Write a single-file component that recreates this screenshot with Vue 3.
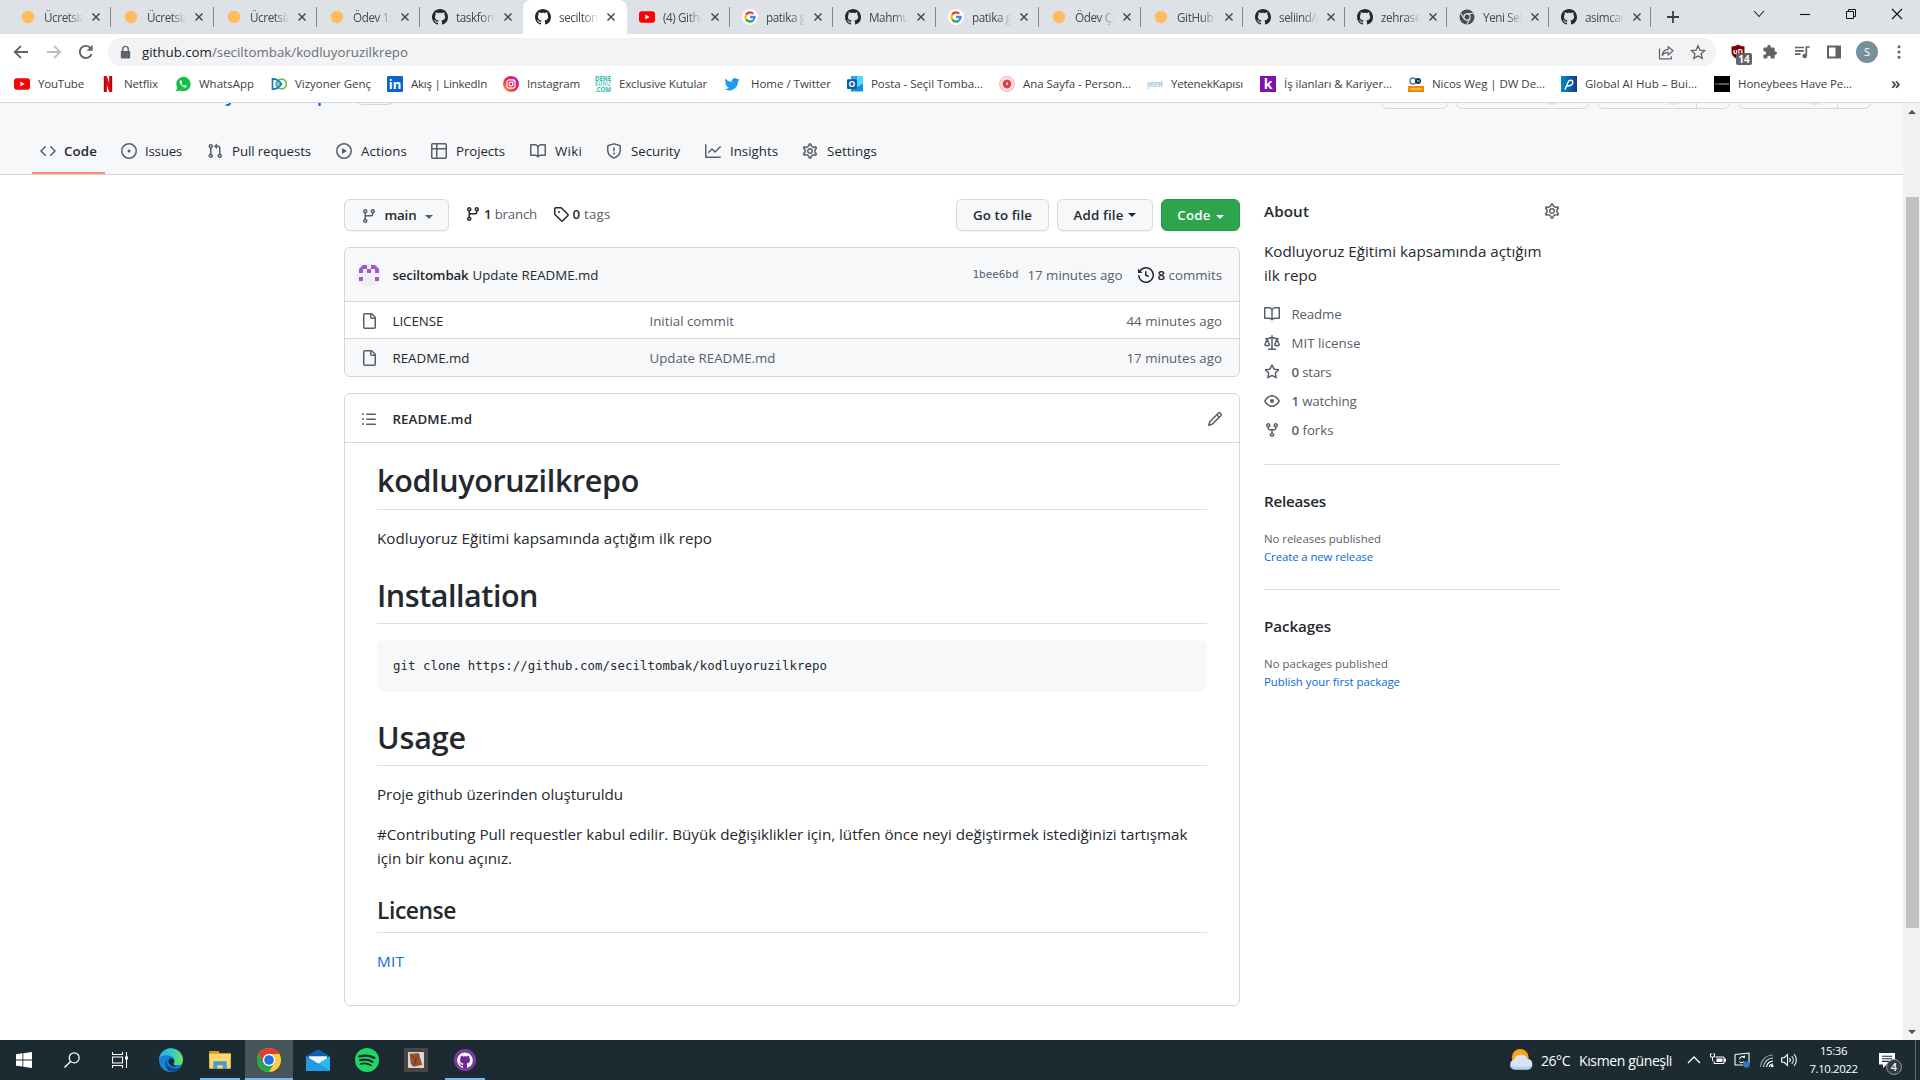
<script setup>
import { h } from 'vue'

const p = (d) => `<path fill-rule="evenodd" d="${d}"/>`
const branch = p('M11.75 2.5a.75.75 0 100 1.5.75.75 0 000-1.5zm-2.25.75a2.25 2.25 0 113 2.122V6A2.5 2.5 0 0110 8.5H6a1 1 0 00-1 1v1.128a2.251 2.251 0 11-1.5 0V5.372a2.25 2.25 0 111.5 0v1.836A2.492 2.492 0 016 7h4a1 1 0 001-1v-.628A2.25 2.25 0 019.5 3.25zM4.25 12a.75.75 0 100 1.5.75.75 0 000-1.5zM3.5 3.25a.75.75 0 111.5 0 .75.75 0 01-1.5 0z')
const githubMark = 'M8 0C3.58 0 0 3.58 0 8c0 3.54 2.29 6.53 5.47 7.59.4.07.55-.17.55-.38 0-.19-.01-.82-.01-1.49-2.01.37-2.53-.49-2.69-.94-.09-.23-.48-.94-.82-1.13-.28-.15-.68-.52-.01-.53.63-.01 1.08.58 1.23.82.72 1.21 1.87.87 2.33.66.07-.52.28-.87.51-1.07-1.78-.2-3.64-.89-3.64-3.95 0-.87.31-1.59.82-2.15-.08-.2-.36-1.02.08-2.12 0 0 .67-.21 2.2.82.64-.18 1.32-.27 2-.27.68 0 1.36.09 2 .27 1.53-1.04 2.2-.82 2.2-.82.44 1.1.16 1.92.08 2.12.51.56.82 1.27.82 2.15 0 3.07-1.87 3.75-3.65 3.95.29.25.54.73.54 1.48 0 1.07-.01 1.93-.01 2.2 0 .21.15.46.55.38A8.013 8.013 0 0016 8c0-4.42-3.58-8-8-8z'
const letter = (x, y, size, fill, text) =>
  `<text x="${x}" y="${y}" font-family="Open Sans, sans-serif" font-weight="700" font-size="${size}" fill="${fill}" text-anchor="middle">${text}</text>`

const icons = {
  code: p('M4.72 3.22a.75.75 0 011.06 1.06L2.06 8l3.72 3.72a.75.75 0 11-1.06 1.06L.47 8.53a.75.75 0 010-1.06l4.25-4.25zm6.56 0a.75.75 0 10-1.06 1.06L13.94 8l-3.72 3.72a.75.75 0 101.06 1.06l4.25-4.25a.75.75 0 000-1.06l-4.25-4.25z'),
  issue: p('M8 9.5a1.5 1.5 0 100-3 1.5 1.5 0 000 3z') + p('M8 0a8 8 0 100 16A8 8 0 008 0zM1.5 8a6.5 6.5 0 1113 0 6.5 6.5 0 01-13 0z'),
  pull: p('M7.177 3.073L9.573.677A.25.25 0 0110 .854v4.792a.25.25 0 01-.427.177L7.177 3.427a.25.25 0 010-.354zM3.75 2.5a.75.75 0 100 1.5.75.75 0 000-1.5zm-2.25.75a2.25 2.25 0 113 2.122v5.256a2.251 2.251 0 11-1.5 0V5.372A2.25 2.25 0 011.5 3.25zM11 2.5h-1V4h1a1 1 0 011 1v5.628a2.251 2.251 0 101.5 0V5A2.5 2.5 0 0011 2.5zm1 10.25a.75.75 0 111.5 0 .75.75 0 01-1.5 0zM3.75 12a.75.75 0 100 1.5.75.75 0 000-1.5z'),
  play: p('M1.5 8a6.5 6.5 0 1113 0 6.5 6.5 0 01-13 0zM8 0a8 8 0 100 16A8 8 0 008 0zM6.379 5.227A.25.25 0 006 5.442v5.117a.25.25 0 00.379.214l4.264-2.559a.25.25 0 000-.428L6.379 5.227z'),
  table: p('M0 1.75C0 .784.784 0 1.75 0h12.5C15.216 0 16 .784 16 1.75v12.5A1.75 1.75 0 0114.25 16H1.75A1.75 1.75 0 010 14.25V1.75zM6.5 6.5v8h7.75a.25.25 0 00.25-.25V6.5h-8zm8-1.5V1.75a.25.25 0 00-.25-.25H6.5V5h8zm-13 1.5v7.75c0 .138.112.25.25.25H5v-8H1.5zM5 5V1.5H1.75a.25.25 0 00-.25.25V5H5z'),
  book: p('M0 1.75A.75.75 0 01.75 1h4.253c1.227 0 2.317.59 3 1.501A3.744 3.744 0 0111.006 1h4.245a.75.75 0 01.75.75v10.5a.75.75 0 01-.75.75h-4.507a2.25 2.25 0 00-1.591.659l-.622.621a.75.75 0 01-1.06 0l-.622-.621A2.25 2.25 0 005.258 13H.75a.75.75 0 01-.75-.75V1.75zm8.755 3a2.25 2.25 0 012.25-2.25H14.5v9h-3.757c-.71 0-1.4.201-1.992.572l.004-7.322zm-1.504 7.324l.004-5.073-.002-2.253A2.25 2.25 0 005.003 2.5H1.5v9h3.757a3.75 3.75 0 011.994.574z'),
  shield: p('M7.467.133a1.75 1.75 0 011.066 0l5.25 1.68A1.75 1.75 0 0115 3.48V7c0 1.566-.32 3.182-1.303 4.682-.983 1.498-2.585 2.813-5.032 3.855a1.7 1.7 0 01-1.33 0c-2.447-1.042-4.049-2.357-5.032-3.855C1.32 10.182 1 8.566 1 7V3.48a1.75 1.75 0 011.217-1.667l5.25-1.68zm.61 1.429a.25.25 0 00-.153 0l-5.25 1.68a.25.25 0 00-.174.238V7c0 1.358.275 2.666 1.057 3.86.784 1.194 2.121 2.34 4.366 3.297a.2.2 0 00.154 0c2.245-.956 3.582-2.104 4.366-3.298C13.225 9.666 13.5 8.36 13.5 7V3.48a.25.25 0 00-.174-.237l-5.25-1.68zM8.75 4.75a.75.75 0 00-1.5 0v3a.75.75 0 001.5 0v-3zM9 10.5a1 1 0 11-2 0 1 1 0 012 0z'),
  graph: p('M1.5 1.75a.75.75 0 00-1.5 0v12.5c0 .414.336.75.75.75h14.5a.75.75 0 000-1.5H1.5V1.75zm14.28 2.53a.75.75 0 00-1.06-1.06L10 7.94 7.53 5.47a.75.75 0 00-1.06 0L3.22 8.72a.75.75 0 001.06 1.06L7 7.06l2.47 2.47a.75.75 0 001.06 0l5.25-5.25z'),
  gear: '<g fill="none" stroke="currentColor" stroke-width="1.4"><path transform="translate(-.72 -.72) scale(1.09)" d="M7.429 1.525a6.593 6.593 0 011.142 0c.036.003.108.036.137.146l.289 1.105c.147.56.55.967.997 1.189.174.086.341.183.501.29.417.278.97.423 1.53.27l1.102-.303c.11-.03.175.016.195.046.219.31.41.641.573.989.014.031.022.11-.059.19l-.815.806c-.411.406-.562.957-.53 1.456a4.588 4.588 0 010 .582c-.032.499.119 1.05.53 1.456l.815.806c.08.08.073.159.059.19a6.494 6.494 0 01-.573.99c-.02.029-.086.074-.195.045l-1.103-.303c-.559-.153-1.112-.008-1.529.27-.16.107-.327.204-.5.29-.449.222-.851.628-.998 1.189l-.289 1.105c-.029.11-.101.143-.137.146a6.613 6.613 0 01-1.142 0c-.036-.003-.108-.037-.137-.146l-.289-1.105c-.147-.56-.55-.967-.997-1.189a4.502 4.502 0 01-.501-.29c-.417-.278-.97-.423-1.53-.27l-1.102.303c-.11.03-.175-.016-.195-.046a6.492 6.492 0 01-.573-.989c-.014-.031-.022-.11.059-.19l.815-.806c.411-.406.562-.957.53-1.456a4.587 4.587 0 010-.582c.032-.499-.119-1.05-.53-1.456l-.815-.806c-.08-.08-.073-.159-.059-.19a6.44 6.44 0 01.573-.99c.02-.029.086-.075.195-.045l1.103.303c.559.153 1.112.008 1.529-.27.16-.107.327-.204.5-.29.449-.222.851-.628.998-1.189l.289-1.105c.029-.11.101-.143.137-.146z"/><circle cx="8" cy="8" r="2.25"/></g>',
  branch,
  tag: p('M2.5 7.775V2.75a.25.25 0 01.25-.25h5.025a.25.25 0 01.177.073l6.25 6.25a.25.25 0 010 .354l-5.025 5.025a.25.25 0 01-.354 0l-6.25-6.25a.25.25 0 01-.073-.177zm-1.5 0V2.75C1 1.784 1.784 1 2.75 1h5.025c.464 0 .91.184 1.238.513l6.25 6.25a1.75 1.75 0 010 2.474l-5.026 5.026a1.75 1.75 0 01-2.474 0l-6.25-6.25A1.75 1.75 0 011 7.775zM6 5a1 1 0 100 2 1 1 0 000-2z'),
  history: p('M1.643 3.143L.427 1.927A.25.25 0 000 2.104V5.75c0 .138.112.25.25.25h3.646a.25.25 0 00.177-.427L2.715 4.215a6.5 6.5 0 11-1.18 4.458.75.75 0 10-1.493.154 8.001 8.001 0 101.6-5.684zM7.75 4a.75.75 0 01.75.75v2.992l2.028.812a.75.75 0 01-.557 1.392l-2.5-1A.75.75 0 017 8.25v-3.5A.75.75 0 017.75 4z'),
  file: p('M3.75 1.5a.25.25 0 00-.25.25v12.5c0 .138.112.25.25.25h9.5a.25.25 0 00.25-.25V6h-2.75A1.75 1.75 0 019 4.25V1.5H3.75zm6.75.062V4.25c0 .138.112.25.25.25h2.688a.252.252 0 00-.011-.013l-2.914-2.914a.272.272 0 00-.013-.011zM2 1.75C2 .784 2.784 0 3.75 0h6.586c.464 0 .909.184 1.237.513l2.914 2.914c.329.328.513.773.513 1.237v9.586A1.75 1.75 0 0113.25 16h-9.5A1.75 1.75 0 012 14.25V1.75z'),
  list: p('M2 4a1 1 0 100-2 1 1 0 000 2zm3.75-1.5a.75.75 0 000 1.5h8.5a.75.75 0 000-1.5h-8.5zm0 5a.75.75 0 000 1.5h8.5a.75.75 0 000-1.5h-8.5zm0 5a.75.75 0 000 1.5h8.5a.75.75 0 000-1.5h-8.5zM3 8a1 1 0 11-2 0 1 1 0 012 0zm-1 6a1 1 0 100-2 1 1 0 000 2z'),
  pencil: p('M11.013 1.427a1.75 1.75 0 012.474 0l1.086 1.086a1.75 1.75 0 010 2.474l-8.61 8.61c-.21.21-.47.364-.756.445l-3.251.93a.75.75 0 01-.927-.928l.929-3.25a1.75 1.75 0 01.445-.758l8.61-8.61zm1.414 1.06a.25.25 0 00-.354 0L10.811 3.75l1.439 1.44 1.263-1.263a.25.25 0 000-.354l-1.086-1.086zM11.189 6.25L9.75 4.81l-6.286 6.287a.25.25 0 00-.064.108l-.558 1.953 1.953-.558a.249.249 0 00.108-.064l6.286-6.286z'),
  law: '<g fill="none" stroke="currentColor" stroke-width="1.5" stroke-linecap="round" stroke-linejoin="round"><path d="M8 .8v13.4M4.7 14.3h6.6M1.8 3.8h1.4c1.6 0 2.6-1.2 4.8-1.2s3.2 1.2 4.8 1.2h1.4"/><path d="M3.1 4.200l-2.200 5.500c1 1.300 3.500 1.300 4.500 0zM12.900 4.200l-2.200 5.500c1 1.300 3.500 1.300 4.500 0z"/></g>',
  star: p('M8 .25a.75.75 0 01.673.418l1.882 3.815 4.21.612a.75.75 0 01.416 1.279l-3.046 2.97.719 4.192a.75.75 0 01-1.088.791L8 12.347l-3.766 1.98a.75.75 0 01-1.088-.79l.72-4.194L.818 6.374a.75.75 0 01.416-1.28l4.21-.611L7.327.668A.75.75 0 018 .25zm0 2.445L6.615 5.5a.75.75 0 01-.564.41l-3.097.45 2.24 2.184a.75.75 0 01.216.664l-.528 3.084 2.769-1.456a.75.75 0 01.698 0l2.77 1.456-.53-3.084a.75.75 0 01.216-.664l2.24-2.183-3.096-.45a.75.75 0 01-.564-.41L8 2.694v.001z'),
  eye: p('M1.679 7.932c.412-.621 1.242-1.75 2.366-2.717C5.175 4.242 6.527 3.5 8 3.5c1.473 0 2.824.742 3.955 1.715 1.124.967 1.954 2.096 2.366 2.717a.119.119 0 010 .136c-.412.621-1.242 1.75-2.366 2.717C10.825 11.758 9.473 12.5 8 12.5c-1.473 0-2.824-.742-3.955-1.715C2.92 9.818 2.09 8.69 1.679 8.068a.119.119 0 010-.136zM8 2c-1.981 0-3.67.992-4.933 2.078C1.797 5.169.88 6.423.43 7.1a1.619 1.619 0 000 1.798c.45.678 1.367 1.932 2.637 3.024C4.329 13.008 6.019 14 8 14c1.981 0 3.67-.992 4.933-2.078 1.27-1.091 2.187-2.345 2.637-3.023a1.619 1.619 0 000-1.798c-.45-.678-1.367-1.932-2.637-3.023C11.671 2.992 9.981 2 8 2zm0 8a2 2 0 100-4 2 2 0 000 4z'),
  fork: p('M5 3.25a.75.75 0 11-1.5 0 .75.75 0 011.5 0zm0 2.122a2.25 2.25 0 10-1.5 0v.878A2.25 2.25 0 005.75 8.5h1.5v2.128a2.251 2.251 0 101.5 0V8.5h1.5a2.25 2.25 0 002.25-2.25v-.878a2.25 2.25 0 10-1.5 0v.878a.75.75 0 01-.75.75h-4.5A.75.75 0 015 6.25v-.878zm3.75 7.378a.75.75 0 11-1.5 0 .75.75 0 011.5 0zm3-8.75a.75.75 0 100-1.5.75.75 0 000 1.5z'),
  github: `<path fill="#24292f" d="${githubMark}"/>`,
  dot: '<circle cx="8" cy="8" r="6.2" fill="#ffbc5c"/>',
  youtube: '<rect x="0" y="2.2" width="16" height="11.6" rx="2.8" fill="#f00"/><path d="M6.4 5.5v5L10.7 8z" fill="#fff"/>',
  google: '<circle cx="8" cy="8" r="8" fill="#fff"/><g fill="none" stroke-width="2.3"><path stroke="#ea4335" d="M4.1 5.7a4.6 4.6 0 017.2-.9"/><path stroke="#fbbc05" d="M4.1 10.3a4.6 4.6 0 010-4.6"/><path stroke="#34a853" d="M11 11.5a4.6 4.6 0 01-6.9-1.2"/><path stroke="#4285f4" d="M8 8h4.6a4.6 4.6 0 01-1.6 3.5"/></g>',
  chromeGrey: '<circle cx="8" cy="8" r="7.5" fill="#4a4d51"/><circle cx="8" cy="8" r="3.7" fill="#dee1e6"/><circle cx="8" cy="8" r="2.5" fill="#4a4d51"/><path d="M8 4.5h6.5M5 9.700L1.800 4.200M11 9.700L7.800 15.300" stroke="#dee1e6" stroke-width="1.1"/>',
  close: '<path d="M4 4l8 8M12 4l-8 8" stroke="#45484c" stroke-width="1.7"/>',
  plus: '<path d="M8 2v12M2 8h12" stroke="#3c4043" stroke-width="1.8"/>',
  chevronDown: '<path d="M3 5l5 5.5L13 5" fill="none" stroke="#222" stroke-width="1.1"/>',
  minimize: '<path d="M3 8.5h10" stroke="#111" stroke-width="1.1"/>',
  restore: '<path d="M3.5 5.5h7v7h-7zM5.5 5.5v-2h7v7h-2" fill="none" stroke="#111"/>',
  winClose: '<path d="M3 3l10 10M13 3L3 13" stroke="#111" stroke-width="1.1"/>',
  back: '<path d="M15 8H2M8 1.800L1.800 8 8 14.200" fill="none" stroke="#5f6368" stroke-width="1.8"/>',
  forward: '<path d="M1 8h13M8 1.800L14.200 8 8 14.200" fill="none" stroke="#babcbe" stroke-width="1.8"/>',
  reload: '<path d="M13.600 10.200A6.100 6.100 0 1112.600 4" fill="none" stroke="#5f6368" stroke-width="1.9"/><path d="M14.6.8v6h-6z" fill="#5f6368"/>',
  lock: '<path d="M5 7V4.500a3 3 0 016 0V7" fill="none" stroke="#5f6368" stroke-width="1.5"/><rect x="3" y="6.3" width="10" height="8" rx="1" fill="#5f6368"/>',
  share: '<path d="M1.500 4.500v10.300h11.800v-2.500M4.200 11.500c.5-4 2.800-6 6-6.200V2.600l4.800 4.200-4.800 4.300V8.300c-2.700 0-4.600 1-6 3.200z" fill="none" stroke="#5f6368" stroke-width="1.2" stroke-linejoin="round"/>',
  starOutline: '<path d="M8 1.700l1.900 4.400 4.800.4-3.600 3.200 1.100 4.700L8 11.900l-4.200 2.500 1.100-4.700L1.300 6.500l4.800-.4z" fill="none" stroke="#5f6368" stroke-width="1.3"/>',
  ublock: '<path d="M8 .5c2 1.300 4 1.900 6.500 2v5c0 4-3 6.500-6.500 8-3.500-1.500-6.500-4-6.500-8v-5C4 2.400 6 1.800 8 .5z" fill="#800000"/>' + letter(8, 10, 7, '#fff', 'uD'),
  puzzle: '<path d="M13.700 7.400h-1V4.700c0-.7-.6-1.300-1.300-1.300H8.700v-1a1.700 1.700 0 00-3.400 0v1H2.700c-.7 0-1.300.6-1.300 1.300v2.500h1a1.800 1.800 0 010 3.600h-1v2.500c0 .7.6 1.300 1.300 1.300h2.500v-1a1.800 1.800 0 013.600 0v1h2.500c.8 0 1.400-.6 1.400-1.300v-2.600h1a1.700 1.700 0 000-3.300z" fill="#5f6368"/>',
  playlist: '<path d="M1 3.500h9M1 6.800h9M1 10.100h5.500M12.300 12V3h3.400" fill="none" stroke="#5f6368" stroke-width="1.7"/><circle cx="10.7" cy="12" r="2.3" fill="#5f6368"/>',
  panel: '<path d="M2 2.500h12v11H2z" fill="none" stroke="#5f6368" stroke-width="2"/><path d="M9.500 2h5v12h-5z" fill="#5f6368"/>',
  dots: '<g fill="#5f6368"><circle cx="8" cy="2.8" r="1.5"/><circle cx="8" cy="8" r="1.5"/><circle cx="8" cy="13.2" r="1.5"/></g>',
  netflix: '<path d="M3.800 0h3v16h-3zM9.200 0h3v16h-3z" fill="#b1060f"/><path d="M3.800 0h3l5.400 16h-3z" fill="#e50914"/>',
  whatsapp: '<path d="M1 15.500l1.200-4A7.200 7.200 0 118 15.200a7.200 7.200 0 01-3.200-.8z" fill="#12c143"/><path d="M5.300 4.300c-1.300 1-.8 3 1.300 5.200s4.300 2.800 5 1.200c.4-.9 0-1-1.500-1.700-.6-.2-.8 1.300-2 .5S6.500 7.800 6.600 7.500c.8-.8.7-1 .2-2.200-.4-1-.9-1.400-1.500-1z" fill="#fff"/>',
  vizyoner: '<g fill="none" stroke-width="1.7"><circle cx="10.5" cy="8" r="4.8" stroke="#6abf4b"/><path d="M1.500 2.800v10.400c4.500 0 7-2 9-5.200-2-3.200-4.500-5.200-9-5.200z" stroke="#1579b8"/><path d="M5 5.800v4.400L9 8z" stroke="#25a9c9" stroke-width="1"/></g>',
  linkedin: '<rect width="16" height="16" rx="1.2" fill="#0a66c2"/>' + letter(8, 13, 13, '#fff', 'in'),
  instagram: '<defs><linearGradient id="ig" x1="0" y1="1" x2="1" y2="0"><stop offset="0" stop-color="#ffc73a"/><stop offset=".45" stop-color="#f5204e"/><stop offset="1" stop-color="#a121d6"/></linearGradient></defs><circle cx="8" cy="8" r="8" fill="url(#ig)"/><rect x="3.9" y="3.9" width="8.2" height="8.2" rx="2.3" fill="none" stroke="#fff" stroke-width="1.2"/><circle cx="8" cy="8" r="1.9" fill="none" stroke="#fff" stroke-width="1.2"/><circle cx="10.3" cy="5.7" r=".6" fill="#fff"/>',
  kutu: '<g font-family="Open Sans, sans-serif" font-weight="700" font-size="6.2" fill="#2db5ac"><text x="0" y="4.6" textLength="16" lengthAdjust="spacingAndGlyphs">DENE</text><text x="0" y="10.2" textLength="16" lengthAdjust="spacingAndGlyphs" opacity=".65">BUNU</text><text x="0" y="15.6" textLength="16" lengthAdjust="spacingAndGlyphs">.COM</text></g>',
  twitter: '<path fill="#1d9bf0" d="M15.500 3.600c-.6.2-1.100.4-1.800.5.6-.4 1.100-1 1.400-1.700-.6.3-1.300.6-2 .7a3.100 3.100 0 00-5.300 2.800A8.700 8.700 0 011.500 2.700a3.100 3.100 0 001 4.100c-.5 0-1-.2-1.400-.4 0 1.500 1.100 2.800 2.500 3.100-.5.1-.9.1-1.400 0 .4 1.300 1.500 2.200 2.900 2.200A6.200 6.200 0 01.5 13a8.800 8.800 0 0013.500-7.800c.6-.4 1.100-1 1.500-1.600z"/>',
  outlook: '<rect x="4" y="0" width="12" height="15" rx="1" fill="#50d9ff"/><path d="M4 0h6v5H4z" fill="#28a8ea"/><path d="M4 5h6v5H4z" fill="#0364b8"/><path d="M4 8l6 3 6-3v7.500H4z" fill="#1490df"/><rect x="0" y="3.2" width="9.8" height="9.8" rx="1" fill="#0a5cab"/>' + letter(4.9, 11.3, 8.5, '#fff', 'O'),
  seal: '<circle cx="8" cy="8" r="7.2" fill="none" stroke="#f3b0b3" stroke-width="1.6" stroke-dasharray="1.8 .5"/><circle cx="8" cy="8" r="5.8" fill="#f9cfd1"/><circle cx="8" cy="8" r="4.2" fill="#dc3e48"/><path d="M7 6.800L8 5.500l1 1.300v2.400H7z" fill="#fff" opacity=".6"/>',
  kapi: '<text x="0" y="10.5" font-family="Open Sans, sans-serif" font-weight="600" font-size="9" fill="#8cbbdd" textLength="16" lengthAdjust="spacingAndGlyphs">yetenek</text>',
  kariyer: '<rect width="16" height="16" fill="#7d12ad"/>' + letter(8, 13, 14, '#fff', 'k'),
  dw: '<circle cx="5" cy="5" r="3" fill="none" stroke="#4f87a8" stroke-width="1.5"/><circle cx="10" cy="5" r="3" fill="#102d5f"/><path d="M9 5h2.500" stroke="#fff"/><rect x="0" y="10" width="16" height="6" fill="#f08a00"/><path d="M2 13h12" stroke="#fbd39a"/>',
  globalai: '<defs><linearGradient id="gai"><stop offset="0" stop-color="#078ac6"/><stop offset="1" stop-color="#18398b"/></linearGradient></defs><rect width="16" height="16" fill="url(#gai)"/><path d="M4 13.500l1.500-3.500 1.700-4c1-2.600 5-2.300 4.600.6-.4 2.500-3.200 3.500-6.300 3.400" fill="none" stroke="#fff" stroke-width="1.5"/>',
  bees: '<rect width="16" height="16" fill="#000"/><path d="M1 8h3" stroke="#b33" stroke-width="1.5"/><path d="M4.500 8H15" stroke="#777" stroke-width="1.5"/>',
  windows: '<path d="M0 2.200l6.500-.9v6.200H0zM7.300 1.200L16 0v7.500H7.300zM0 8.400h6.500v6.200L0 13.800zM7.300 8.400H16V16l-8.700-1.200z" fill="#fff"/>',
  search: '<circle cx="10.2" cy="5.8" r="5" fill="none" stroke="#fff" stroke-width="1.2"/><path d="M6.600 9.400L.5 15.500" stroke="#fff" stroke-width="1.4"/>',
  taskview: '<path d="M.5 0v2.500h10V0M.5 16v-2.500h10V16M.5 5h10v6H.5zM14.500 0v16" fill="none" stroke="#fff" stroke-width="1.1"/><path d="M13 4.500h3v3h-3z" fill="#fff"/>',
  edge: '<defs><linearGradient id="e1"><stop offset="0" stop-color="#29a8e8"/><stop offset=".6" stop-color="#39cfb6"/><stop offset="1" stop-color="#73e35a"/></linearGradient><linearGradient id="e2" x2="0" y2="1"><stop offset="0" stop-color="#1477cf"/><stop offset="1" stop-color="#1d8ade"/></linearGradient></defs><circle cx="8" cy="8" r="8" fill="url(#e2)"/><path d="M.1 7A8 8 0 0116 8c0 2.500-2 3.700-4 3.700-2.200 0-2.800-.9-2.200-1.600C11.500 8 9.500 5.500 6.500 5 3.500 4.500 1 5.500.1 7z" fill="url(#e1)"/><path d="M7 6.200c-3 1.500-2.500 7 3.500 7.300 1.900 0 3.300-.6 4.300-1.200a8 8 0 01-6 3.600C4 15.500 2.600 8.700 7 6.200z" fill="#0d4a8c"/><path d="M9.800 10.100C11 8.500 9.500 6.500 7.300 6.900c-1.500 1-1.300 4 1.200 5.300 1.500.6 4 .4 5.500-.8-2.500.8-5 .2-4.200-1.300z" fill="#16303a"/>',
  folder: '<path d="M.8 2.500C.8 2 1 2 1.500 2H7l1 1.500h7.200v3H.8z" fill="#dd9a09"/><rect x=".8" y="3.8" width="14.4" height="10" fill="#ffd76a"/><path d="M3.500 13.800V9.500c0-.4.3-.6.6-.6h7.800c.3 0 .6.2.6.6v4.300h-2.700v-2.300H6.200v2.300z" fill="#3e9bdc"/>',
  chrome: '<circle cx="8" cy="8" r="8" fill="#ffcd40"/><path d="M1.070 4A8 8 0 0114.930 4H8a4 4 0 00-3.460 6z" fill="#e33b2e"/><path d="M1.070 4A8 8 0 008 16l3.460-6a4 4 0 01-6.920 0z" fill="#2ba24c"/><circle cx="8" cy="8" r="4.1" fill="#fff"/><circle cx="8" cy="8" r="3.2" fill="#1a73e8"/>',
  mail: '<path d="M0 5.500L8 .8l8 4.700v9.700H0z" fill="#0f5fb3"/><path d="M2 5.500h12v6H2z" fill="#f3f3f3"/><path d="M0 5.500l8 5 8-5v9.700H0z" fill="#2fb6ee"/><path d="M0 15.200V5.500l16 9.700z" fill="#1f9be4"/>',
  spotify: '<circle cx="8" cy="8" r="8" fill="#1ed760"/><g fill="none" stroke="#1a2a30" stroke-linecap="round"><path stroke-width="1.6" d="M3 5.600c3.300-.9 6.900-.6 9.800 1"/><path stroke-width="1.4" d="M3.400 8.200c2.800-.8 5.800-.4 8.300 1"/><path stroke-width="1.2" d="M3.800 10.600c2.300-.6 4.700-.3 6.800.9"/></g>',
  photo: '<rect width="16" height="16" fill="#4b4644"/><rect x="2.7" y="2.7" width="10.6" height="10.6" fill="#d9dcdf"/><path d="M3.800 3.900l6-.6 2.400 7.900-6 1.300-1.700-1.800z" fill="#9a512c"/><path d="M5 5l3 2.500 2-3.200M8 7.500L7 11.500" fill="none" stroke="#6d351a" stroke-width=".6"/>',
  desktop: `<circle cx="8" cy="8" r="8" fill="#8436ac"/><circle cx="8" cy="8" r="5.9" fill="#6d2792"/><path transform="translate(2.3 2.5) scale(.71)" fill="#fff" d="${githubMark}"/>`,
  weather: '<circle cx="7.5" cy="6.3" r="5.6" fill="#fba40e"/><path d="M4 14.300a3.400 3.400 0 01-.5-6.700 4.700 4.700 0 018.800-.4 3.600 3.600 0 01.4 7.100z" fill="#d8e3f5"/><path d="M4 14.300c-2 0-3.300-1-3.400-2.600 3 1 11 1 15 0-.3 1.600-1.500 2.600-3 2.600z" fill="#bccdec"/>',
  up: '<path d="M2 11l6-6 6 6" fill="none" stroke="#fff" stroke-width="1.3"/>',
  battery: '<path d="M5.500 5h8.500v6.500H4V9M14.500 7v2.500h1V7z" fill="none" stroke="#fff"/><path d="M6.500 6.500h6v3.500h-6z" fill="#fff"/><path d="M.5 2v3h4V2M2.500 5v4M1 1v1.500M4 1v1.500" fill="none" stroke="#fff"/>',
  monitor: '<path d="M1 2.500l14-1.500v10M9 13H1V2.500" fill="none" stroke="#fff" stroke-width="1.1"/><path d="M10.500 5.300a3 3 0 00-5 2M5.300 9.500a3 3 0 004.700 0M10.500 3.500v2H8.700" fill="none" stroke="#fff" stroke-width="1.1"/><circle cx="12.5" cy="12.5" r="3.3" fill="#2f74c8"/>',
  wifi: '<g fill="none" stroke-width="1.2"><path stroke="#8d989b" d="M1.500 14A12.500 12.500 0 0114 2"/><path stroke="#d4d8d9" d="M4.500 14A9.500 9.500 0 0114 5"/><path stroke="#fff" d="M7.500 14A6.500 6.500 0 0114 8M10.300 14A3.500 3.500 0 0114 11"/></g><circle cx="13.2" cy="13" r="1.3" fill="#fff"/>',
  sound: '<path d="M.7 5.700h2.500L6.500 2.500v11L3.200 10.300H.7zM8.500 6a3 3 0 010 4M10.700 4a6 6 0 010 8M13 2a9 9 0 010 12" fill="none" stroke="#fff" stroke-width="1.1"/>',
  notify: '<path d="M0 1h16v11.500H7.500L4 16v-3.500H0z" fill="#fff"/><path d="M3 4.200h10M3 6.800h10M3 9.400h7" stroke="#1c2c32" stroke-width="1.1"/>',
  arrowUp: '<path d="M4 10l4-4 4 4z" fill="#505050"/>',
  arrowDown: '<path d="M4 6l4 4 4-4z" fill="#505050"/>',
}

const Icon = (props) =>
  h('svg', {
    viewBox: '0 0 16 16',
    width: props.size || 16,
    height: props.size || 16,
    fill: 'currentColor',
    innerHTML: icons[props.name],
  })
Icon.props = ['name', 'size']

// Tracks a label out (or in) until it spans the given number of pixels.
const vFit = {
  mounted(el, { value }) {
    const natural = el.getBoundingClientRect().width
    el.style.letterSpacing = `${((value - natural) / el.textContent.trim().length).toFixed(3)}px`
  },
}

const tabs = [
  ['dot', 'Ücretsiz', 103], ['dot', 'Ücretsiz', 103], ['dot', 'Ücretsiz', 103], ['dot', 'Ödev 1:', 103],
  ['github', 'taskforce', 103], ['github', 'seciltombak', 104, true], ['youtube', '(4) Github', 103],
  ['google', 'patika gi', 103], ['github', 'Mahmut', 103], ['google', 'patika gi', 103],
  ['dot', 'Ödev Ça', 102], ['dot', 'GitHub K', 102], ['github', 'seliind/p', 102], ['github', 'zehrasel', 102],
  ['chromeGrey', 'Yeni Sek', 102], ['github', 'asimcan', 102],
].map(([icon, title, width, active]) => ({ icon, title, width, active }))

const bookmarks = [
  ['youtube', 'YouTube', 46, 86], ['netflix', 'Netflix', 34, 75], ['whatsapp', 'WhatsApp', 55, 96],
  ['vizyoner', 'Vizyoner Genç', 76, 116], ['linkedin', 'Akış | LinkedIn', 76, 116], ['instagram', 'Instagram', 53, 92],
  ['kutu', 'Exclusive Kutular', 88, 129], ['twitter', 'Home / Twitter', 80, 123, true], ['outlook', 'Posta - Seçil Tomba...', 112, 152],
  ['seal', 'Ana Sayfa - Person...', 108, 148], ['kapi', 'YetenekKapısı', 72, 113], ['kariyer', 'İş ilanları & Kariyer...', 108, 148],
  ['dw', 'Nicos Weg | DW De...', 113, 153], ['globalai', 'Global AI Hub – Bui...', 112, 153], ['bees', 'Honeybees Have Pe...', 114, 150],
].map(([icon, title, fit, width, wide]) => ({ icon, title, fit, width, wide }))

const nav = [
  ['code', 'Code', 33, 73, true], ['issue', 'Issues', 37, 78], ['pull', 'Pull requests', 79, 121], ['play', 'Actions', 46, 87],
  ['table', 'Projects', 49, 91], ['book', 'Wiki', 27, 68], ['shield', 'Security', 49, 91], ['graph', 'Insights', 48, 89], ['gear', 'Settings', 50, 91],
].map(([icon, title, fit, width, active]) => ({ icon, title, fit, width, active }))

const files = [
  { name: 'LICENSE', nameFit: 51, message: 'Initial commit', messageFit: 84.5, age: '44 minutes ago' },
  { name: 'README.md', nameFit: 77, message: 'Update README.md', messageFit: 126, age: '17 minutes ago' },
]

const facts = [
  ['book', '', 'Readme', 50], ['law', '', 'MIT license', 69], ['star', '0', ' stars', 40], ['eye', '1', ' watching', 65], ['fork', '0', ' forks', 42],
].map(([icon, count, label, fit]) => ({ icon, count, label, fit }))

const apps = [
  { icon: 'edge', size: 24 }, { icon: 'folder', size: 24, open: true }, { icon: 'chrome', size: 24, open: true, active: true },
  { icon: 'mail', size: 24 }, { icon: 'spotify', size: 24 }, { icon: 'photo', size: 24 }, { icon: 'desktop', size: 22, open: true },
]
</script>

<template>
  <div class="screen">
    <div class="tabstrip">
      <div v-for="(t, i) in tabs" :key="i" class="tab" :class="{ active: t.active, plain: i === 4 }" :style="{ width: t.width + 'px' }">
        <Icon class="favicon" :name="t.icon" />
        <span class="tab-title">{{ t.title }}</span>
        <Icon class="tab-close" name="close" :size="14" />
      </div>
      <Icon class="new-tab" name="plus" />
      <div class="window-controls">
        <Icon name="chevronDown" /><Icon name="minimize" /><Icon name="restore" /><Icon name="winClose" />
      </div>
    </div>

    <div class="toolbar">
      <div class="nav-buttons"><Icon name="back" /><Icon name="forward" /><Icon name="reload" /></div>
      <div class="omnibox">
        <Icon name="lock" :size="15" />
        <span v-fit="266" class="url"><b>github.com</b>/seciltombak/kodluyoruzilkrepo</span>
        <div class="omni-actions"><Icon name="share" /><Icon name="starOutline" /></div>
      </div>
      <div class="extensions">
        <span class="ublock"><Icon name="ublock" /><i>14</i></span>
        <Icon name="puzzle" /><Icon name="playlist" /><Icon name="panel" />
        <span class="profile">S</span>
        <Icon class="menu" name="dots" />
      </div>
    </div>

    <div class="bookmarks">
      <div v-for="b in bookmarks" :key="b.title" class="bookmark" :class="{ wide: b.wide }" :style="{ width: b.width + 'px' }">
        <Icon :name="b.icon" /><span v-fit="b.fit">{{ b.title }}</span>
      </div>
      <span class="more">»</span>
    </div>

    <div class="viewport">
      <div class="page">
        <header class="repo-head">
          <div class="head-clip">
            <div class="repo-title">
              <span v-fit="113">seciltombak</span><em>/</em><strong v-fit="166">kodluyoruzilkrepo</strong><i></i>
            </div>
            <div class="head-buttons">
              <span class="hb pin"></span>
              <span class="hb watch"><i></i></span>
              <span class="hb fork"><i></i><u></u></span>
              <span class="hb stars"><i></i><u></u></span>
            </div>
          </div>
          <nav class="repo-nav">
            <a v-for="n in nav" :key="n.title" :class="{ active: n.active }" :style="{ width: n.width + 'px' }">
              <Icon :name="n.icon" /><span v-fit="n.fit">{{ n.title }}</span>
            </a>
          </nav>
        </header>

        <div class="columns">
          <main>
            <div class="actions">
              <button class="btn main-btn"><Icon name="branch" /><span v-fit="32">main</span><i class="caret"></i></button>
              <span class="stat branches"><Icon name="branch" /><span v-fit="53"><b>1</b> branch</span></span>
              <span class="stat tags"><Icon name="tag" /><span v-fit="38"><b>0</b> tags</span></span>
              <button class="btn goto"><span v-fit="59">Go to file</span></button>
              <button class="btn add"><span v-fit="50">Add file</span><i class="caret"></i></button>
              <button class="btn green"><span v-fit="33.5">Code</span><i class="caret"></i></button>
            </div>

            <section class="box files">
              <div class="commit">
                <svg class="identicon" width="24" height="24" viewBox="0 0 24 24">
                  <circle cx="12" cy="12" r="12" fill="#f0f0f0" />
                  <path fill="#9c5ad3" d="M2 6l4-4h4v4h4V2h4l4 4v4h-4V6h-4v4h-4V6H6v4H2zM2 14h4v4H2zM18 14h4v4h-4z" />
                </svg>
                <span v-fit="76" class="author">seciltombak</span>
                <span v-fit="126" class="msg">Update README.md</span>
                <span v-fit="46" class="sha">1bee6bd</span>
                <span v-fit="95" class="age">17 minutes ago</span>
                <Icon class="history" name="history" />
                <span v-fit="64.5" class="commits"><b>8</b> commits</span>
              </div>
              <div v-for="f in files" :key="f.name" class="row">
                <Icon name="file" />
                <span class="cell name"><span v-fit="f.nameFit">{{ f.name }}</span></span>
                <span class="cell message"><span v-fit="f.messageFit">{{ f.message }}</span></span>
                <span v-fit="95.5" class="when">{{ f.age }}</span>
              </div>
            </section>

            <section class="box readme">
              <div class="readme-head">
                <Icon name="list" /><span v-fit="79.5">README.md</span><Icon class="edit" name="pencil" />
              </div>
              <article class="markdown">
                <h1><span v-fit="262">kodluyoruzilkrepo</span></h1>
                <p><span v-fit="335">Kodluyoruz Eğitimi kapsamında açtığım ilk repo</span></p>
                <h1><span v-fit="161">Installation</span></h1>
                <pre><span v-fit="434">git clone https://github.com/seciltombak/kodluyoruzilkrepo</span></pre>
                <h1><span v-fit="89">Usage</span></h1>
                <p><span v-fit="246">Proje github üzerinden oluşturuldu</span></p>
                <p>
                  <span v-fit="810.5">#Contributing Pull requestler kabul edilir. Büyük değişiklikler için, lütfen önce neyi değiştirmek istediğinizi tartışmak</span><br />
                  <span v-fit="135">için bir konu açınız.</span>
                </p>
                <h2><span v-fit="79">License</span></h2>
                <p><a v-fit="27">MIT</a></p>
              </article>
            </section>
          </main>

          <aside>
            <section class="about">
              <h3><span v-fit="45">About</span><Icon name="gear" /></h3>
              <p class="desc"><span v-fit="277.5">Kodluyoruz Eğitimi kapsamında açtığım</span><br /><span v-fit="53">ilk repo</span></p>
              <div v-for="f in facts" :key="f.label" class="fact">
                <Icon :name="f.icon" /><span v-fit="f.fit"><b>{{ f.count }}</b>{{ f.label }}</span>
              </div>
            </section>
            <section class="extra">
              <h3><span v-fit="62">Releases</span></h3>
              <p><span v-fit="117">No releases published</span></p>
              <a v-fit="109">Create a new release</a>
            </section>
            <section class="extra">
              <h3><span v-fit="67">Packages</span></h3>
              <p><span v-fit="124">No packages published</span></p>
              <a v-fit="136">Publish your first package</a>
            </section>
          </aside>
        </div>
      </div>
      <div class="scrollbar"><Icon name="arrowUp" /><div class="track"><div class="thumb"></div></div><Icon name="arrowDown" /></div>
    </div>

    <footer class="taskbar">
      <div class="system">
        <span><Icon name="windows" /></span><span><Icon name="search" /></span><span><Icon name="taskview" /></span>
      </div>
      <div class="apps">
        <span v-for="a in apps" :key="a.icon" :class="{ open: a.open, current: a.active }"><Icon :name="a.icon" :size="a.size" /></span>
      </div>
      <div class="tray">
        <Icon class="weather" name="weather" :size="24" />
        <span v-fit="29" class="temp">26°C</span>
        <span v-fit="93" class="sky">Kısmen güneşli</span>
        <Icon class="t-up" name="up" /><Icon class="t-bat" name="battery" /><Icon class="t-mon" name="monitor" /><Icon class="t-wifi" name="wifi" /><Icon name="sound" />
        <div class="clock"><span v-fit="27">15:36</span><span v-fit="48">7.10.2022</span></div>
        <div class="notify"><Icon name="notify" /><b>4</b></div>
        <div class="peek"></div>
      </div>
    </footer>
  </div>
</template>

<style>
body { overflow: hidden; }
</style>

<style scoped>
* { box-sizing: border-box; }
.screen {
  width: 1920px; height: 1080px; display: flex; flex-direction: column; overflow: hidden;
  background: #fff; color: #24292f; font-family: "Open Sans", "Noto Sans", sans-serif; font-size: 13.3px; white-space: nowrap;
}
svg { display: block; flex: none; }
span, strong, a { display: inline-block; }
b { font-weight: 600; }

/* browser chrome */
.tabstrip { height: 34px; flex: none; display: flex; background: #dee1e6; padding-left: 8px; }
.tab { flex: none; height: 34px; display: flex; align-items: center; padding-left: 12px; position: relative; }
.tab::after { content: ""; position: absolute; right: 0; top: 7px; width: 1px; height: 20px; background: #85888d; }
.tab-title {
  width: 40px; margin: 0 5px 1px 8px; overflow: hidden; font-size: 11.7px; letter-spacing: -0.4px; color: #45484c;
  mask-image: linear-gradient(90deg, #000 60%, transparent 98%);
}
.tab.active { background: #fff; border-radius: 8px 8px 0 0; }
.tab.active::after, .tab.plain::after { display: none; }
.new-tab { margin: 9px 0 0 14px; }
.window-controls { margin-left: auto; display: flex; gap: 30px; padding: 6px 15px 0 0; }

.toolbar { height: 36px; flex: none; display: flex; align-items: center; background: #fff; }
.nav-buttons { width: 108px; display: flex; gap: 16.5px; padding-left: 13px; }
.omnibox { width: 1608px; height: 28px; border-radius: 14px; background: #f1f3f4; display: flex; align-items: center; padding: 0 10px; }
.url { margin-left: 9px; font-size: 13.3px; color: #6b6f74; }
.url b { font-weight: 400; color: #202124; }
.omni-actions { margin-left: auto; display: flex; gap: 16px; }
.extensions { display: flex; align-items: center; padding-left: 14px; gap: 16px; }
.ublock { position: relative; }
.ublock i {
  position: absolute; left: 6px; top: 9px; width: 16px; height: 12px; border-radius: 2px; background: #5f6368; color: #fff;
  font: 700 10px/12px "Open Sans", sans-serif; text-align: center;
}
.profile { width: 22px; height: 22px; border-radius: 50%; background: #78909c; color: #fff; font-size: 11px; line-height: 22px; text-align: center; margin-left: -2px; }
.menu { margin-left: -3px; }

.bookmarks { height: 33px; flex: none; display: flex; padding: 6px 0 0 14px; border-bottom: 1px solid #d5d8dc; font-size: 11.5px; color: #3c4043; }
.bookmark { height: 16px; flex: none; display: flex; align-items: center; gap: 8px; }
.bookmark span { margin-bottom: 2px; }
.bookmark.wide { gap: 11px; }
.more { margin-left: 27px; font-size: 17px; line-height: 14px; font-weight: 600; }

/* page */
.viewport { flex: 1; min-height: 0; display: flex; }
.page { width: 1903px; overflow: hidden; }
.repo-head { height: 72px; background: #f6f8fa; border-bottom: 1px solid #d0d7de; display: flex; flex-direction: column; justify-content: space-between; }
.head-clip { height: 6px; overflow: hidden; display: flex; justify-content: space-between; align-items: flex-end; padding: 0 32px; }
.repo-title { display: flex; align-items: flex-end; height: 30px; padding-left: 17px; font-size: 19px; line-height: 29px; color: #0969da; }
.repo-title em { width: 12px; text-align: center; font-style: normal; line-height: 25px; color: #57606a; }
.repo-title strong { font-weight: 600; }
.repo-title i { width: 44px; height: 20px; margin: 0 0 4.5px 13px; border: 1px solid #d0d7de; border-radius: 10px; }
.head-buttons { display: flex; gap: 8px; }
.hb { position: relative; height: 28px; border: 1px solid #d3d8dd; border-radius: 6px; }
.pin { width: 67px; }
.watch, .fork, .stars { width: 133px; }
.hb i { position: absolute; left: 66px; bottom: 3px; width: 20px; height: 20px; border-radius: 10px; background: #e4e7ea; }
.watch i { left: 85px; }
.hb u { position: absolute; left: 98px; top: 0; width: 1px; height: 28px; background: #d3d8dd; }
.repo-nav { display: flex; gap: 8px; padding-left: 32px; }
.repo-nav a { height: 47px; display: flex; gap: 9px; align-items: flex-start; padding: 16px 0 0 8px; line-height: 16px; }
.repo-nav a:nth-child(-n + 2) { gap: 8px; }
.repo-nav svg { color: #57606a; }
.repo-nav a.active { font-weight: 600; border-bottom: 2px solid #fd8c73; }

.columns { display: flex; gap: 24px; padding: 24px 0 0 344px; }
main { width: 896px; }
.actions { height: 32px; display: flex; align-items: center; }
.btn {
  height: 32px; padding: 0 0 1px; border: 1px solid #d5d9dd; border-radius: 6px; background: #f6f8fa; color: #24292f; font: 600 13.3px/20px "Open Sans", sans-serif;
  display: flex; align-items: center; justify-content: center; box-shadow: 0 1px 0 rgba(27, 31, 36, 0.04);
}
.caret { width: 0; height: 0; margin-left: 5px; border: 4px solid transparent; border-top-color: currentColor; border-bottom: 0; }
.main-btn { width: 105px; }
.main-btn svg { color: #57606a; margin-right: 8px; margin-top: 2px; }
.main-btn .caret { margin: 4px 0 0 8px; color: #57606a; }
.stat { display: flex; align-items: center; color: #57606a; margin-top: -2px; }
.stat svg, .stat b, .commits b { color: #24292f; }
.branches { margin-left: 16px; gap: 3px; }
.tags { margin-left: 15.5px; gap: 4px; }
.goto { width: 93px; margin-left: auto; }
.add { width: 96px; margin-left: 8px; }
.green { width: 79px; margin-left: 8px; background: #2da44e; border-color: #2a964a; color: #fff; }
.green .caret { margin-top: 4px; }

.box { border: 1px solid #d0d7de; border-radius: 6px; overflow: hidden; }
.files { margin-top: 16px; height: 130px; color: #57606a; }
.commit { height: 54px; background: #f6f8fa; border-bottom: 1px solid #d0d7de; display: flex; align-items: center; padding: 0 17px 0 12px; }
.identicon { border-radius: 50%; overflow: hidden; }
.author { margin-left: 11.5px; font-weight: 600; color: #24292f; }
.msg { margin-left: 4px; color: #24292f; }
.sha { margin-left: auto; font: 11px "DejaVu Sans Mono", monospace; }
.age { margin-left: 9px; }
.history { margin: 1px 4px 0 15px; color: #24292f; }
.row { height: 36px; display: flex; align-items: center; padding: 1px 17px 0 16px; }
.row + .row { background: #f6f8fa; border-top: 1px solid #d0d7de; padding-top: 0; height: 38px; }
.name { width: 257px; margin-left: 15.5px; color: #24292f; }
.when { margin-left: auto; }

.readme { margin-top: 16px; height: 613px; }
.readme-head { height: 49px; display: flex; align-items: center; padding: 1px 16px 0; border-bottom: 1px solid #d0d7de; font-weight: 600; }
.readme-head span { margin-left: 15.5px; }
.readme-head svg { color: #57606a; }
.edit { margin-left: auto; }
.markdown { padding: 16px 32px 32px; font-size: 15.2px; line-height: 24px; }
.markdown p { margin: 0 0 16px; }
.markdown h1, .markdown h2 { margin: 24px 0 16px; font-weight: 600; border-bottom: 1px solid #d8dee4; }
.markdown h1 { font-size: 30.5px; line-height: 40px; height: 50.6px; padding-top: 1px; }
.markdown h2 { font-size: 22.8px; line-height: 30px; height: 38.2px; padding-top: 2px; }
.markdown h1:first-child { margin-top: 0; }
.markdown pre { margin: 0 0 24px; height: 51.7px; padding: 16px; border-radius: 6px; background: #f6f8fa; font: 12.4px/20px "DejaVu Sans Mono", monospace; }
a { color: #0969da; }
.repo-nav a { color: #24292f; }

aside { width: 296px; color: #57606a; }
aside h3 { margin: 0; display: flex; align-items: center; justify-content: space-between; color: #24292f; font-size: 15.2px; line-height: 24px; font-weight: 600; }
aside h3 svg { color: #57606a; }
.desc { margin: 16px 0 12px; color: #24292f; font-size: 15.2px; line-height: 24px; }
.fact { height: 29px; display: flex; align-items: center; gap: 11.5px; }
.about { height: 266px; border-bottom: 1px solid #d8dee4; }
.extra { height: 124px; padding-top: 24px; font-size: 11.4px; line-height: 18px; }
.extra + .extra { border-top: 1px solid #d8dee4; }
.extra p { margin: 17px 0 0; }
.extra a { display: table; }

.scrollbar { width: 17px; background: #f1f1f1; display: flex; flex-direction: column; align-items: center; padding: 1px 0 0 1px; }
.track { flex: 1; width: 13px; padding-top: 77px; }
.thumb { width: 13px; height: 731px; background: #c1c1c1; }

/* windows taskbar */
.taskbar { height: 40px; flex: none; display: flex; background: #1b2b31; color: #fff; }
.system { display: flex; width: 147px; }
.system span { width: 48px; height: 40px; display: flex; align-items: center; justify-content: center; }
.apps { display: flex; gap: 1px; }
.apps span { width: 48px; height: 40px; display: flex; align-items: center; justify-content: center; position: relative; }
.apps .current { background: #475459; }
.apps .open::after { content: ""; position: absolute; left: 4px; right: 4px; bottom: 0; height: 2px; background: #76b9ed; }
.apps .current::after { left: 0; right: 0; }
.tray { margin-left: auto; display: flex; align-items: center; font-size: 14px; }
.temp { margin-left: 8px; }
.sky { margin: 0 14px 0 9px; }
.t-bat, .t-mon { margin-left: 8px; }
.t-wifi { margin: 2px 6px 0 9px; }
.clock { width: 73px; display: flex; flex-direction: column; align-items: center; padding-bottom: 1px; font-size: 11.4px; line-height: 17.5px; }
.notify { position: relative; margin-left: 9px; }
.notify b { position: absolute; left: 7px; top: 7px; width: 16px; height: 16px; border: 1px solid #8d9598; border-radius: 50%; background: #313d42; font: 600 11px/14px "Open Sans", sans-serif; text-align: center; }
.peek { width: 1px; height: 40px; margin: 0 4px 0 20px; background: #5c686c; }
</style>
